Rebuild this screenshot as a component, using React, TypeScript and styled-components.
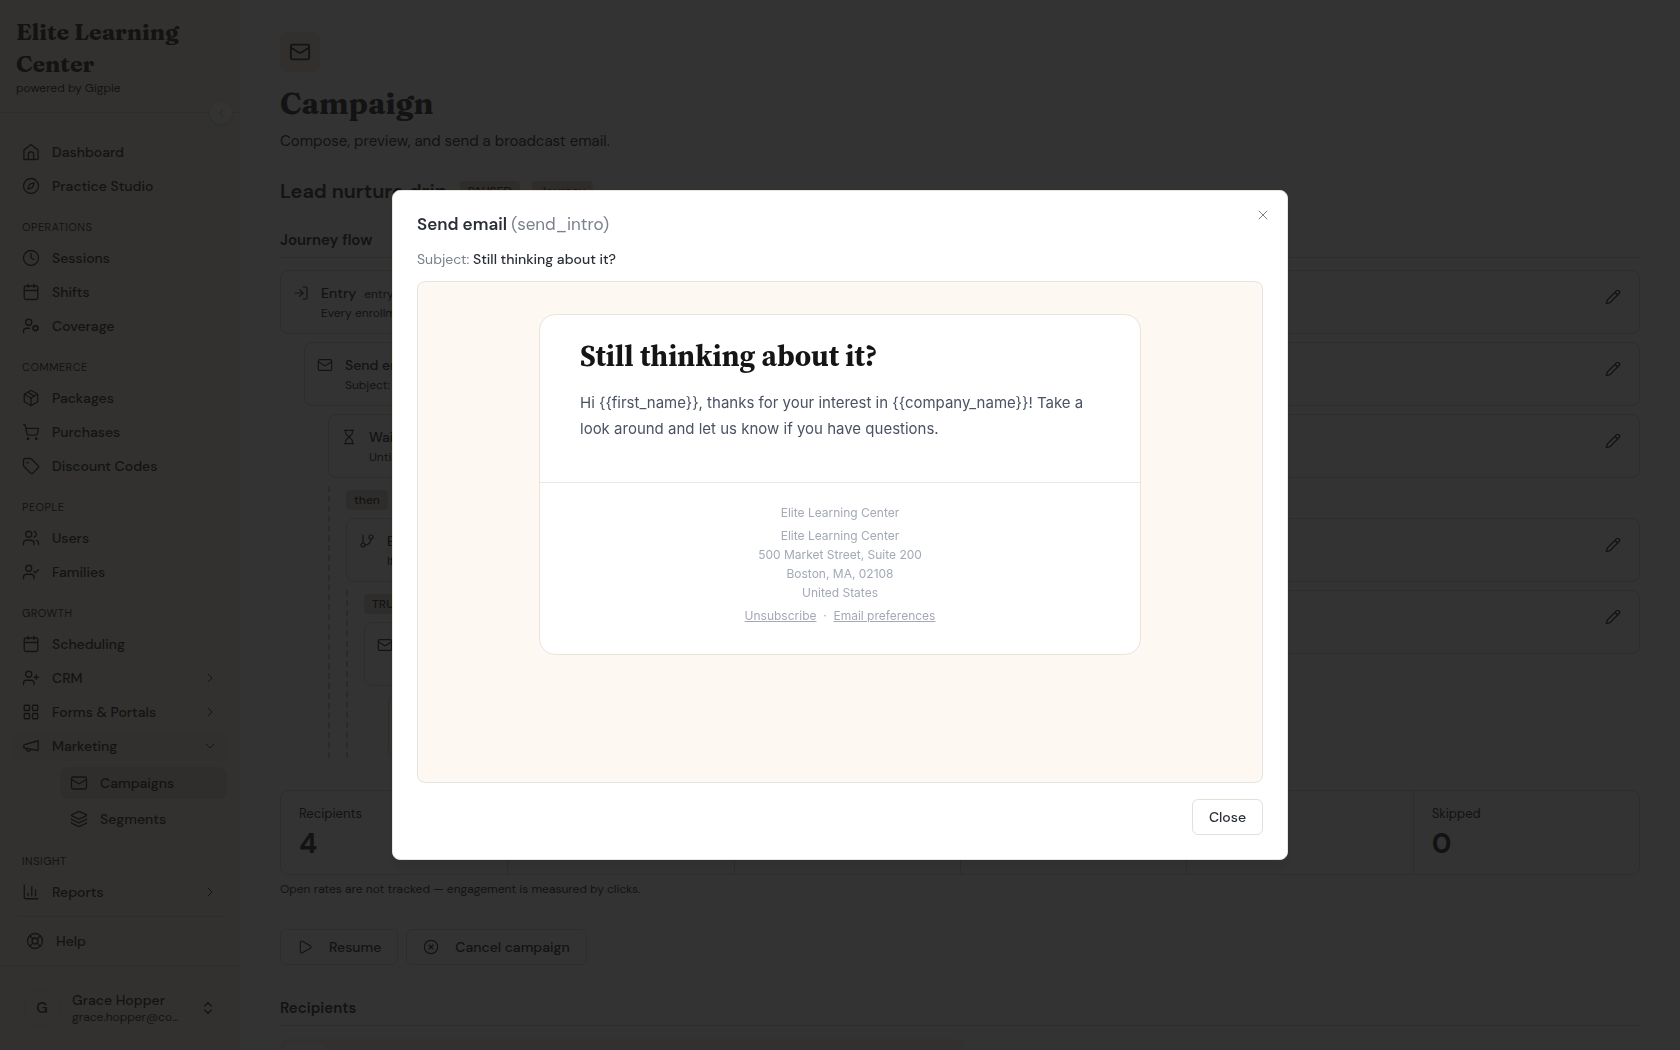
import React from "react";
import styled, { createGlobalStyle } from "styled-components";
import {
  Calendar, ChartColumn, ChevronDown, ChevronLeft, ChevronRight, ChevronsUpDown, CircleX, Clock, Compass,
  GitBranch, Hourglass, Layers, LayoutGrid, LifeBuoy, LogIn, Mail, Package, Pencil, Play,
  ShoppingCart, Tag, UserCheck, UserCog, UserPlus, Users, X,
} from "lucide-react";

const ink = "#606060";
const line = "#e2e0dc";
const sans = `"DM Sans", Inter, "Liberation Sans", sans-serif`;
const serif = `Fraunces, "Liberation Serif", serif`;

const GlobalStyle = createGlobalStyle`
  *, *::before, *::after { box-sizing: border-box; }
  body { margin: 0; background: #fff; color: ${ink}; font-family: ${sans}; font-size: 14px; line-height: 20px; }
  h1, h2, h3, p, ul { margin: 0; padding: 0; }
  ul { list-style: none; }
  a { color: inherit; text-decoration: none; }
  button { font: inherit; color: inherit; background: none; border: 0; padding: 0; cursor: pointer; }
  svg { flex: none; }
`;

const Shell = styled.div`
  display: flex;
  height: 100vh;
  overflow: hidden;
`;

const Sidebar = styled.aside`
  display: flex;
  flex-direction: column;
  flex: none;
  width: 240px;
  background: #faf5ee;
`;

const Brand = styled.header`
  position: relative;
  padding: 16px;
  border-bottom: 1px solid ${line};
`;

const BrandName = styled.h2`
  font: 700 23px/32px ${serif};
`;

const BrandNote = styled.p`
  font-size: 12px;
  line-height: 16px;
`;

const Collapse = styled.button`
  position: absolute;
  right: 8px;
  bottom: -12px;
  display: grid;
  place-items: center;
  width: 22px;
  height: 22px;
  border-radius: 50%;
  background: #fff;
  box-shadow: 0 1px 3px rgba(0, 0, 0, 0.15);
  color: #b4b4b4;
`;

const Nav = styled.nav`
  flex: 1;
  padding: 24px 13px 0;
`;

const NavHeading = styled.h3`
  padding: 18px 9px 8px;
  font-size: 11px;
  font-weight: 400;
  line-height: 16px;
  letter-spacing: 0.5px;
`;

const NavList = styled.ul`
  display: grid;
  gap: 4px;
`;

const NavLink = styled.a<{ $active?: boolean }>`
  display: flex;
  align-items: center;
  gap: 12px;
  height: 30px;
  padding: 0 9px;
  border-radius: 8px;
  font-weight: 500;
  background: ${(p) => (p.$active ? "#f4efe8" : "none")};
`;

const NavText = styled.span`
  flex: 1;
`;

const SubList = styled(NavList)`
  margin: 6px 0 0 47px;
`;

const SubLink = styled(NavLink)`
  height: 32px;
  padding: 0 10px;
  background: ${(p) => (p.$active ? "#ebe5dc" : "none")};
`;

const HelpRow = styled.div`
  margin: 9px 3px 0 4px;
  padding: 9px 0 8px;
  border-top: 1px solid ${line};
`;

const UserRow = styled.button`
  display: flex;
  align-items: center;
  gap: 12px;
  height: 85px;
  padding: 0 24px;
  border-top: 1px solid ${line};
  text-align: left;
`;

const Avatar = styled.span`
  display: grid;
  place-items: center;
  width: 36px;
  height: 36px;
  border: 1px solid #eee6da;
  border-radius: 50%;
  font-size: 15px;
  font-weight: 500;
`;

const UserText = styled.span`
  flex: 1;
`;

const UserName = styled.span`
  display: block;
  font-weight: 500;
  line-height: 18px;
`;

const UserMail = styled.span`
  display: block;
  font-size: 12px;
  line-height: 16px;
`;

const Main = styled.main`
  flex: 1;
  min-width: 0;
  padding: 32px 40px 0;
`;

const Tile = styled.div`
  display: grid;
  place-items: center;
  width: 40px;
  height: 40px;
  border-radius: 8px;
  background: #f8f0e6;
`;

const PageTitle = styled.h1`
  margin-top: 12px;
  font: 700 30px/40px ${serif};
`;

const PageNote = styled.p`
  margin-top: 5px;
  font-size: 15px;
  line-height: 24px;
`;

const TitleRow = styled.div`
  display: flex;
  align-items: center;
  gap: 12px;
  margin-top: 24px;
`;

const JourneyName = styled.h2`
  font-size: 20px;
  font-weight: 600;
  line-height: 28px;
`;

const Chip = styled.span`
  display: inline-block;
  padding: 0 8px;
  border-radius: 4px;
  background: #ebe2d6;
  font-size: 12px;
  font-weight: 500;
  line-height: 20px;
`;

const ChipRow = styled.div`
  display: flex;
`;

const SectionTitle = styled.h3`
  padding-bottom: 5px;
  border-bottom: 1px solid ${line};
  font-size: 15px;
  font-weight: 600;
  line-height: 24px;
`;

const Flow = styled.section`
  margin: 23px 0 32px;
`;

const Steps = styled.div`
  display: grid;
  gap: 8px;
  margin-top: 12px;
`;

const Card = styled.article<{ $level?: number; $end?: boolean }>`
  display: flex;
  align-items: start;
  gap: 12px;
  height: 64px;
  margin-left: ${(p) => (p.$level || 0) * 24}px;
  padding: 12px;
  border: 1px solid ${(p) => (p.$end ? "#f0dada" : line)};
  border-radius: 8px;
`;

const CardIcon = styled.span`
  display: grid;
  place-items: center;
  width: 16px;
  height: 20px;
`;

const CardText = styled.div`
  flex: 1;
  font-size: 12px;
  line-height: 18px;
`;

const CardTitle = styled.p`
  font-size: 12px;
  line-height: 20px;

  strong {
    margin-right: 8px;
    font-size: 14px;
    font-weight: 500;
  }
`;

const EditButton = styled.button`
  display: grid;
  place-items: center;
  width: 28px;
  height: 28px;
`;

const Branch = styled.div<{ $indent?: number }>`
  display: grid;
  gap: 8px;
  align-content: start;
  margin-left: ${(p) => p.$indent || 0}px;
  padding: 4px 0 0 16px;
  border-left: 2px dashed #d4d2ce;
`;

const Paths = styled.div`
  display: grid;
  grid-template-columns: 1fr 1fr;
  gap: 12px;
`;

const Stats = styled.dl`
  display: grid;
  grid-template-columns: repeat(6, 1fr);
  margin: 0;
  border: 1px solid ${line};
  border-radius: 8px;
`;

const Stat = styled.div`
  height: 83px;
  padding: 13px 18px;

  & + & {
    border-left: 1px solid ${line};
  }

  dt {
    font-size: 13px;
    line-height: 20px;
  }

  dd {
    margin: 0;
    font-size: 28px;
    font-weight: 700;
    line-height: 40px;
  }
`;

const Footnote = styled.p`
  margin-top: 4px;
  font-size: 12px;
  line-height: 20px;
`;

const Actions = styled.div`
  display: flex;
  gap: 8px;
  margin: 30px 0 31px;
`;

const ActionButton = styled.button`
  display: flex;
  align-items: center;
  gap: 16px;
  height: 36px;
  padding: 0 16px;
  border: 1px solid ${line};
  border-radius: 6px;
  font-weight: 500;
`;

const TableStub = styled.div`
  width: 684px;
  height: 48px;
  margin-top: 13px;
  padding: 4px;
  border-radius: 8px;
  background: #f8f3ed;
`;

const TabStub = styled.div`
  width: 40px;
  height: 40px;
  border-radius: 6px;
  background: #fff;
`;

const Overlay = styled.div`
  position: fixed;
  inset: 0;
  display: grid;
  place-items: center;
  background: rgba(0, 0, 0, 0.8);
`;

const Dialog = styled.section`
  position: relative;
  width: min(896px, 100%);
  padding: 24px;
  border: 1px solid #e8e4dc;
  border-radius: 8px;
  background: #fff;
  box-shadow: 0 10px 15px -3px rgba(0, 0, 0, 0.1);
  color: #2a2e37;
`;

const DialogTitle = styled.h2`
  font-size: 17px;
  font-weight: 600;
  line-height: 18px;
`;

const Muted = styled.span`
  color: #7b818d;
  font-weight: 400;
`;

const Subject = styled.p`
  margin-top: 16px;
  font-weight: 500;
`;

const DialogClose = styled.button`
  position: absolute;
  top: 16px;
  right: 16px;
  display: grid;
  color: #7b818d;
`;

const Preview = styled.div`
  height: 502px;
  margin-top: 12px;
  padding: 32px;
  border: 1px solid #e6e4e0;
  border-radius: 8px;
  background: #fdf8f1;
`;

const Email = styled.article`
  max-width: 602px;
  margin: 0 auto;
  border: 1px solid #e8e4dc;
  border-radius: 16px;
  background: #fff;
  font-family: Inter, sans-serif;
`;

const EmailBody = styled.div`
  padding: 24px 40px 40px;
  color: #4a5263;
  font-size: 15px;
  line-height: 26px;
`;

const EmailTitle = styled.h1`
  margin-bottom: 16px;
  color: #151515;
  font: 700 29px/35px "Source Serif 4", "Liberation Serif", serif;
`;

const EmailFooter = styled.footer`
  display: grid;
  gap: 4px;
  padding: 20px 40px 29px;
  border-top: 1px solid #ece8e0;
  color: #a3a9b5;
  font-size: 12px;
  line-height: 19px;
  text-align: center;

  a {
    text-decoration: underline;
  }
`;

const DialogActions = styled.div`
  display: flex;
  justify-content: flex-end;
  margin-top: 16px;
`;

const CloseButton = styled.button`
  height: 36px;
  padding: 0 16px;
  border: 1px solid #e4e0d8;
  border-radius: 6px;
  font-weight: 500;
`;

type IconProps = { size?: number; strokeWidth?: number };
type IconType = React.ComponentType<IconProps>;
type Item = { icon: IconType; label: string; more?: boolean; open?: boolean };

const Glyph = ({ size = 18, strokeWidth = 1.5, d }: IconProps & { d: string }) => (
  <svg
    width={size} height={size} viewBox="0 0 24 24" fill="none" stroke="currentColor"
    strokeWidth={strokeWidth} strokeLinecap="round" strokeLinejoin="round" aria-hidden="true"
  >
    <path d={d} />
  </svg>
);

const Home = (p: IconProps) => (
  <Glyph {...p} d="M2.5 9.5 12 2l9.500 7.500V21a1 1 0 0 1-1 1h-17a1 1 0 0 1-1-1zM8.500 22v-7.500a2.500 2.500 0 0 1 2.500-2.500h2a2.500 2.500 0 0 1 2.500 2.500V22" />
);

const Horn = (p: IconProps) => (
  <Glyph {...p} d="m2.500 10.500 19-5.500v13l-19-3.500zM11.600 16.800a3 3 0 1 1-5.800-1.600" />
);

const groups: { title?: string; items: Item[] }[] = [
  { items: [{ icon: Home, label: "Dashboard" }, { icon: Compass, label: "Practice Studio" }] },
  {
    title: "OPERATIONS",
    items: [{ icon: Clock, label: "Sessions" }, { icon: Calendar, label: "Shifts" }, { icon: UserCog, label: "Coverage" }],
  },
  {
    title: "COMMERCE",
    items: [
      { icon: Package, label: "Packages" },
      { icon: ShoppingCart, label: "Purchases" },
      { icon: Tag, label: "Discount Codes" },
    ],
  },
  { title: "PEOPLE", items: [{ icon: Users, label: "Users" }, { icon: UserCheck, label: "Families" }] },
  {
    title: "GROWTH",
    items: [
      { icon: Calendar, label: "Scheduling" },
      { icon: UserPlus, label: "CRM", more: true },
      { icon: LayoutGrid, label: "Forms & Portals", more: true },
      { icon: Horn, label: "Marketing", open: true },
    ],
  },
  { title: "INSIGHT", items: [{ icon: ChartColumn, label: "Reports", more: true }] },
];

const stats = [
  ["Recipients", "4"], ["Sent", "0"], ["Delivered", "0"], ["Clicked", "0"], ["Failed", "0"], ["Skipped", "0"],
];

function NavItem({ icon: Icon, label, more, open }: Item) {
  return (
    <li>
      <NavLink href="#" $active={open}>
        <Icon size={18} strokeWidth={1.75} />
        <NavText>{label}</NavText>
        {more && <ChevronRight size={16} strokeWidth={1.5} />}
        {open && <ChevronDown size={16} strokeWidth={1.5} />}
      </NavLink>
      {open && (
        <SubList>
          <li><SubLink href="#" $active><Mail size={18} strokeWidth={1.75} />Campaigns</SubLink></li>
          <li><SubLink href="#"><Layers size={18} strokeWidth={1.75} />Segments</SubLink></li>
        </SubList>
      )}
    </li>
  );
}

type StepProps = { icon: IconType; title: string; id?: string; note?: string; level?: number };

function Step({ icon: Icon, title, id, note, level }: StepProps) {
  return (
    <Card $level={level}>
      <CardIcon><Icon size={16} strokeWidth={1.75} /></CardIcon>
      <CardText>
        <CardTitle><strong>{title}</strong>{id}</CardTitle>
        <p>{note}</p>
      </CardText>
      <EditButton aria-label={`Edit ${title}`}><Pencil size={16} /></EditButton>
    </Card>
  );
}

export default function App() {
  return (
    <>
      <GlobalStyle />
      <Shell>
        <Sidebar>
          <Brand>
            <BrandName>Elite Learning Center</BrandName>
            <BrandNote>powered by Gigpie</BrandNote>
            <Collapse aria-label="Collapse sidebar"><ChevronLeft size={12} /></Collapse>
          </Brand>
          <Nav>
            {groups.map((g, i) => (
              <div key={i}>
                {g.title && <NavHeading>{g.title}</NavHeading>}
                <NavList>{g.items.map((item) => <NavItem key={item.label} {...item} />)}</NavList>
              </div>
            ))}
            <HelpRow>
              <NavLink href="#"><LifeBuoy size={18} strokeWidth={1.75} />Help</NavLink>
            </HelpRow>
          </Nav>
          <UserRow>
            <Avatar>G</Avatar>
            <UserText>
              <UserName>Grace Hopper</UserName>
              <UserMail>grace.hopper@co…</UserMail>
            </UserText>
            <ChevronsUpDown size={16} />
          </UserRow>
        </Sidebar>
        <Main>
          <Tile><Mail size={22} /></Tile>
          <PageTitle>Campaign</PageTitle>
          <PageNote>Compose, preview, and send a broadcast email.</PageNote>
          <TitleRow>
            <JourneyName>Lead nurture drip</JourneyName>
            <Chip>PAUSED</Chip>
            <Chip>Journey</Chip>
          </TitleRow>
          <Flow>
            <SectionTitle>Journey flow</SectionTitle>
            <Steps>
              <Step icon={LogIn} title="Entry" id="entry" note="Every enrollment starts here" />
              <Step icon={Mail} title="Send email" id="send_intro" note="Subject: Still thinking about it?" level={1} />
              <Step icon={Hourglass} title="Wait" note="Until clicked" level={2} />
              <Branch $indent={48}>
                <ChipRow><Chip>then</Chip></ChipRow>
                <Step icon={GitBranch} title="Branch" note="If clicked" />
                <Paths>
                  <Branch>
                    <ChipRow><Chip>TRUE</Chip></ChipRow>
                    <Step icon={Mail} title="Send email" />
                    <Card $level={1} $end />
                  </Branch>
                  <Step icon={Mail} title="Send email" />
                </Paths>
              </Branch>
            </Steps>
          </Flow>
          <Stats>
            {stats.map(([label, value]) => (
              <Stat key={label}><dt>{label}</dt><dd>{value}</dd></Stat>
            ))}
          </Stats>
          <Footnote>Open rates are not tracked — engagement is measured by clicks.</Footnote>
          <Actions>
            <ActionButton><Play size={16} strokeWidth={1.75} />Resume</ActionButton>
            <ActionButton><CircleX size={16} strokeWidth={1.75} />Cancel campaign</ActionButton>
          </Actions>
          <SectionTitle>Recipients</SectionTitle>
          <TableStub><TabStub /></TableStub>
        </Main>
      </Shell>
      <Overlay>
        <Dialog role="dialog" aria-modal="true" aria-labelledby="dialog-title">
          <DialogTitle id="dialog-title">Send email <Muted>(send_intro)</Muted></DialogTitle>
          <Subject><Muted>Subject:</Muted> Still thinking about it?</Subject>
          <Preview>
            <Email>
              <EmailBody>
                <EmailTitle>Still thinking about it?</EmailTitle>
                <p>
                  {"Hi {{first_name}}, thanks for your interest in {{company_name}}! Take a look around and let us know if you have questions."}
                </p>
              </EmailBody>
              <EmailFooter>
                <p>Elite Learning Center</p>
                <p>
                  Elite Learning Center<br />
                  500 Market Street, Suite 200<br />
                  Boston, MA, 02108<br />
                  United States
                </p>
                <p><a href="#">Unsubscribe</a> &nbsp;·&nbsp; <a href="#">Email preferences</a></p>
              </EmailFooter>
            </Email>
          </Preview>
          <DialogActions><CloseButton>Close</CloseButton></DialogActions>
          <DialogClose aria-label="Close dialog"><X size={16} strokeWidth={1.5} /></DialogClose>
        </Dialog>
      </Overlay>
    </>
  );
}
